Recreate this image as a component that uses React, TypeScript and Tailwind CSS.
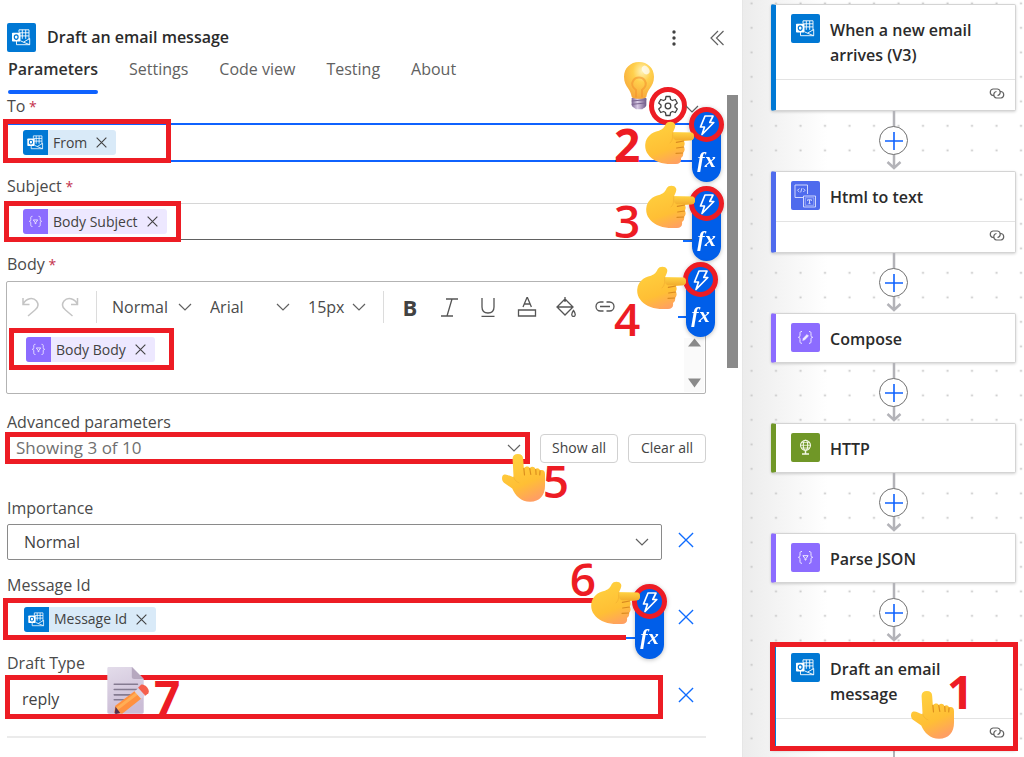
import React from "react";

type Glyph = "outlook" | "html" | "compose" | "http" | "json";

function GlyphArt({ kind }: { kind: Glyph }) {
  if (kind === "outlook") {
    return (
      <>
        <g fill="none" stroke="#fff" strokeWidth="0.9">
          <path d="M12 9.500V6.800h10v9.700M12 9.800h10M12 12.900h10M15.300 6.800v9M18.700 6.800v9" />
          <path d="M9.500 18v3.700h13.200v-6.200l-6.200 3.700-3-1.400M16.500 19.200l6.200 2.500" />
        </g>
        <rect x="5" y="9.800" width="8.500" height="8.700" rx="0.8" fill="#fff" />
        <ellipse cx="9.200" cy="14.100" rx="1.900" ry="2.200" fill="none" stroke="#0078d4" strokeWidth="1.200" />
      </>
    );
  }
  if (kind === "html") {
    return (
      <g fill="none" stroke="#dfe3ff" strokeWidth="0.9">
        <path d="M12 16.500H4V4h12.500v9" />
        <path d="M12.500 15h12v11h-12z" />
        <path d="M14.300 16.800h8.500v7.500h-8.500z" strokeWidth="0.5" />
        <path d="M8.300 7.500L6.500 9.300l1.800 1.700M12.300 7.500L14 9.300 12.300 11M10.900 7.200L9.700 11.400" />
        <path d="M16.500 19.800v-1h4v1M18.500 18.800v3.600M17.500 22.400h2" />
      </g>
    );
  }
  if (kind === "http") {
    return (
      <g fill="none" stroke="#f2f7e6" strokeWidth="1.100">
        <circle cx="14.500" cy="12.300" r="5" />
        <ellipse cx="14.500" cy="12.300" rx="2.200" ry="5" />
        <path d="M9.500 12.300h10M10.300 9.600h8.400M10.300 15h8.400" strokeWidth="0.8" />
        <path d="M14.500 17.500v3M11 21h7" strokeWidth="1.500" />
      </g>
    );
  }
  return (
    <g fill="none" stroke="#f1ecff" strokeWidth="1">
      <path d="M11 8.500c-1.800 0-2 .6-2 2v1.800c0 1.200-.5 2-1.700 2 1.200 0 1.700.8 1.700 2v2c0 1.400.2 2 2 2" />
      <path d="M18 8.500c1.800 0 2 .6 2 2v1.800c0 1.200.5 2 1.700 2-1.200 0-1.700.8-1.700 2v2c0 1.400-.2 2-2 2" />
      {kind === "json" ? (
        <path d="M11.900 12.700h5.200l-2.100 2.800v1.500h-1v-1.500z" />
      ) : (
        <path d="M11.700 17.500l.6-2.300 3.700-3.700 1.500 1.500-3.700 3.700z" fill="#f1ecff" strokeWidth="0.5" />
      )}
    </g>
  );
}

const tileColor: Record<Glyph, string> = {
  outlook: "bg-[#0078d4]",
  html: "bg-[#4f6bed]",
  compose: "bg-[#8c6cff]",
  http: "bg-[#709727]",
  json: "bg-[#8c6cff]",
};

function Tile({ kind, small = false }: { kind: Glyph; small?: boolean }) {
  return (
    <svg viewBox="0 0 29 29" aria-hidden="true" className={`${small ? "size-[25px] rounded-l-[3px]" : "size-[29px] rounded-xs"} shrink-0 ${tileColor[kind]}`}>
      <GlyphArt kind={kind} />
    </svg>
  );
}

function Chevron({ className = "" }: { className?: string }) {
  return (
    <svg viewBox="0 0 14 8" aria-hidden="true" className={`h-2 w-3.5 shrink-0 ${className}`} fill="none" stroke="#616161" strokeWidth="1.200">
      <path d="M1 1l6 6 6-6" />
    </svg>
  );
}

function Cross({ className }: { className: string }) {
  return (
    <svg viewBox="0 0 12 12" aria-hidden="true" className={className} fill="none" stroke="currentColor">
      <path d="M.7.7l10.600 10.600M11.300.7L.7 11.300" />
    </svg>
  );
}

function Chip({ kind, text }: { kind: Glyph; text: string }) {
  return (
    <span className={`flex h-[25px] items-center rounded-[3px] text-sm text-[#424242] ${kind === "outlook" ? "bg-[#d9eaf8]" : "bg-[#ede8ff]"}`}>
      <Tile kind={kind} small />
      <span className="pl-[5px] whitespace-nowrap">{text}</span>
      <button aria-label={`Remove ${text}`} className="flex w-[29px] justify-center">
        <Cross className="size-[11px] stroke-[1.2]" />
      </button>
    </span>
  );
}

function Label({ children, required = false, className = "" }: { children: React.ReactNode; required?: boolean; className?: string }) {
  return (
    <div className={`h-5 text-base leading-5 text-[#4a4a4a] ${className}`}>
      {children}
      {required && <span className="text-sm leading-5 text-[#c4314b]"> *</span>}
    </div>
  );
}

const lift = "drop-shadow-[0_1px_2px_rgba(0,0,0,0.25)]";

function TokenPill({ className }: { className: string }) {
  return (
    <div className={`absolute z-10 flex h-[72px] w-[29px] flex-col items-center rounded-full bg-[#005ee9] ${lift} ${className}`}>
      <button aria-label="Dynamic content" className="-mt-[3px] flex size-[35px] shrink-0 items-center justify-center rounded-full border-5 border-[#ed1c24] bg-[#005ee9]">
        <svg viewBox="0 0 18 22" className="h-[22px] w-[18px]" fill="none" stroke="#fff" strokeWidth="1.700" strokeLinejoin="round">
          <path d="M7 2h8l-3.200 6.500h4L4 20.500l2.500-7.500h-4z" />
        </svg>
      </button>
      <button aria-label="Expression" className="pt-1 font-[Liberation_Serif,serif] text-[22px] leading-7 font-bold text-white italic">
        fx
      </button>
    </div>
  );
}

function Frame({ className }: { className: string }) {
  return <div aria-hidden="true" className={`pointer-events-none absolute border-5 border-[#ed1c24] ${className}`} />;
}

function Step({ n, bold = false, className }: { n: number; bold?: boolean; className: string }) {
  return (
    <span className={`pointer-events-none absolute z-10 text-[46px] leading-[46px] text-[#ed1c24] ${bold ? "font-bold" : "font-semibold"} ${className}`}>
      {n}
    </span>
  );
}

function HandDefs() {
  return (
    <svg className="absolute size-0" aria-hidden="true">
      <defs>
        <linearGradient id="skin" x1="0.2" y1="0" x2="0.6" y2="1">
          <stop offset="0" stopColor="#ffd23f" />
          <stop offset="0.65" stopColor="#ffbf35" />
          <stop offset="1" stopColor="#ff9f62" />
        </linearGradient>
        <linearGradient id="finger" x1="0" y1="0" x2="0" y2="1">
          <stop offset="0" stopColor="#ffd545" />
          <stop offset="1" stopColor="#efa72b" />
        </linearGradient>
        <radialGradient id="glass" cx="0.6" cy="0.25" r="0.75">
          <stop offset="0" stopColor="#fff3b8" />
          <stop offset="0.4" stopColor="#ffd04c" />
          <stop offset="1" stopColor="#f7a83b" />
        </radialGradient>
        <linearGradient id="cap" x1="0" x2="1">
          <stop offset="0" stopColor="#7d6796" />
          <stop offset="0.4" stopColor="#d9cbe6" />
          <stop offset="1" stopColor="#6f5a87" />
        </linearGradient>
        <linearGradient id="sheet" x1="0" y1="0" x2="0.3" y2="1">
          <stop offset="0" stopColor="#e3dcea" />
          <stop offset="1" stopColor="#cbbdd6" />
        </linearGradient>
      </defs>
    </svg>
  );
}

function HandRight({ className }: { className: string }) {
  return (
    <svg viewBox="0 0 147 129" aria-hidden="true" className={`pointer-events-none absolute z-20 h-[43px] w-[49px] ${className}`}>
      <path fill="url(#skin)" d="M62 10C67 0 86 0 90 10c3 7-2 15-6 24l55 2c6 1 8 6 8 11s-3 10-9 11l-22 2c4 5 4 12 0 17 5 6 3 14-2 19 2 7-2 12-6 15 2 12-4 17-15 18-20 2-44-1-60-9C10 108-2 90 1 68 3 48 18 34 42 29 54 25 57 20 62 10z" />
      <path fill="url(#finger)" d="M88 34h51c6 1 8 6 8 12 0 7-4 11-9 12H92c-10-4-12-20-4-24z" opacity="0.8" />
      <path d="M116 60l-22 4M116 78l-21 3M113 96l-20 1" fill="none" stroke="#d98a20" strokeWidth="3.500" strokeLinecap="round" />
      <path d="M84 34c-3 11 2 22-9 32" fill="none" stroke="#e8a02a" strokeWidth="2" strokeLinecap="round" opacity="0.6" />
    </svg>
  );
}

function HandUp({ className }: { className: string }) {
  return (
    <svg viewBox="0 0 134 148" aria-hidden="true" className={`pointer-events-none absolute z-20 h-[49px] w-[45px] ${className}`}>
      <path fill="url(#skin)" d="M34 18C34 8 40 3 50 3s16 5 16 15l2 28c5-7 14-7 18-1 6-6 14-4 17 3 5-4 12-2 14 4 9-2 15 1 15 12v34c0 30-16 49-45 49-28 0-44-18-54-40L8 90C0 84 0 67 9 65c8-2 16 5 28 8z" />
      <path d="M68 46l2 20M86 47l3 18M104 50l1 15M117 54l-1 12" fill="none" stroke="#dc8e1e" strokeWidth="3.500" strokeLinecap="round" />
      <path d="M37 72c2 10 9 15 16 18" fill="none" stroke="#eaa530" strokeWidth="2" strokeLinecap="round" opacity="0.6" />
    </svg>
  );
}

function Bulb({ className }: { className: string }) {
  return (
    <svg viewBox="0 0 90 144" aria-hidden="true" className={`pointer-events-none absolute z-10 h-12 w-[30px] ${className}`}>
      <path d="M23 108h44v20c0 8-8 9-12 14H36c-4-5-13-7-13-14z" fill="url(#cap)" />
      <path d="M23 117l44-4M23 127l43-4" stroke="#7a6591" strokeWidth="3" />
      <path d="M45 0c26 0 45 19 45 44 0 16-6 26-12 35-6 8-9 15-11 25-2 8-42 8-44 0-2-10-5-17-11-25C6 70 0 60 0 44 0 19 19 0 45 0z" fill="url(#glass)" />
      <path d="M36 106V84C24 76 22 64 28 55c8-11 26-11 34 0 6 9 4 21-8 29v22" fill="none" stroke="#f4932f" strokeWidth="6" opacity="0.6" />
      <ellipse cx="65" cy="24" rx="10" ry="14" fill="#fff" opacity="0.7" transform="rotate(-35 65 24)" />
    </svg>
  );
}

function Memo({ className }: { className: string }) {
  return (
    <svg viewBox="0 0 127 142" aria-hidden="true" className={`pointer-events-none absolute z-10 h-[47px] w-[42px] ${className}`}>
      <path d="M5 0h72l34 36v100c0 3-2 5-5 5H6c-3 0-5-2-5-5V5c0-3 1-5 4-5z" fill="url(#sheet)" />
      <path d="M75 0v30c0 4 3 6 7 6h29z" fill="#b6a8bf" />
      <path d="M22 52h70M22 68h70M22 84h48M22 99h36" stroke="#857b91" strokeWidth="5" strokeLinecap="round" />
      <path d="M85 72l19 23-58 46-24-3 3-21z" fill="#ff9140" />
      <path d="M88 76l6 7-62 48-5-8z" fill="#ffae55" />
      <path d="M83 74l13-11 19 23-12 10z" fill="#dcd3e4" />
      <path d="M94 63l8-9c9-7 30 13 23 25l-9 8z" fill="#f5604d" />
      <path d="M26 120l14 19-13 3-4-2z" fill="#53304f" />
    </svg>
  );
}

const tools: { name: string; art: React.ReactNode }[] = [
  { name: "Italic", art: <path d="M7 2h12M2 19h12M13 2L8 19" /> },
  { name: "Underline", art: <path d="M4 1v9c0 4 2 6 6 6s6-2 6-6V1M3.500 19.500h13" /> },
  { name: "Font color", art: <path d="M6 10l4.200-10 4.200 10M7.500 7h5.500M1.500 13h17v6h-17z" /> },
  { name: "Fill color", art: <path d="M9 0v5M9 2L1 10l8 8 8-8zM2 10h14M17.500 13.500c3 4 1.500 6 0 6s-3-2 0-6z" /> },
  { name: "Link", art: <path d="M8.500 5H5.500a4.500 4.500 0 000 9h3M11.500 5h3a4.500 4.500 0 010 9h-3M5 9.500h10" /> },
];

function ToolSelect({ label, value, width }: { label: string; value: string; width: string }) {
  return (
    <span className={`relative flex items-center ${width}`}>
      <select aria-label={label} className="w-full appearance-none bg-transparent text-base text-[#4a4a4a]">
        <option>{value}</option>
      </select>
      <Chevron className="pointer-events-none absolute right-0" />
    </span>
  );
}

function Editor() {
  return (
    <div className="relative mt-[7px] -ml-px h-[113px] rounded-xs border border-[#b3b3b3]">
      <div className="flex h-[49px] items-center pl-3.5">
        <button aria-label="Undo" className="w-5">
          <svg viewBox="0 0 20 20" className="size-5" fill="none" stroke="#c4c4c4" strokeWidth="1.500">
            <path d="M2 1v6.500h6.500M2 7.500C5 1 12 0 15.500 4c3 4 1 7-1.500 9l-7 6" />
          </svg>
        </button>
        <button aria-label="Redo" className="ml-[19px] w-5">
          <svg viewBox="0 0 20 20" className="size-5" fill="none" stroke="#c4c4c4" strokeWidth="1.500">
            <path d="M17.500 1v6.500H11M17.500 7.500C14.500 1 7.500 0 4 4c-3 4-1 7 1.500 9l7 6" />
          </svg>
        </button>
        <span className="ml-4 h-8 w-px bg-[#dcdcdc]" />
        <span className="flex gap-[18px] pl-[15px]">
          <ToolSelect label="Block format" value="Normal" width="w-20" />
          <ToolSelect label="Font family" value="Arial" width="w-20" />
          <ToolSelect label="Font size" value="15px" width="w-[58px]" />
        </span>
        <span className="ml-[17px] h-8 w-px bg-[#dcdcdc]" />
        <span className="flex items-center gap-[19px] pl-4">
          <button aria-label="Bold" className="w-5 text-[22px] leading-6 font-bold text-[#424242]">B</button>
          {tools.map((t) => (
            <button key={t.name} aria-label={t.name}>
              <svg viewBox="0 0 20 20" className="size-5" fill="none" stroke="#555" strokeWidth="1.300">
                {t.art}
              </svg>
            </button>
          ))}
        </span>
      </div>
      <div className="flex pt-1.5 pl-[19px]">
        <Chip kind="json" text="Body Body" />
      </div>
      <Frame className="top-[46px] left-0.5 h-[42px] w-[165px]" />
      <div className="absolute right-px bottom-px flex h-[54px] w-5 flex-col items-center justify-between bg-[#fafafa] pb-1">
        <svg viewBox="0 0 13 8" className="h-[9px] w-[13px]" fill="#8a8a8a"><path d="M6.500 0L13 8H0z" /></svg>
        <svg viewBox="0 0 13 9" className="h-[10px] w-[13px]" fill="#8a8a8a"><path d="M0 0h13L6.500 9z" /></svg>
      </div>
      <Step n={4} className="top-[13px] left-[607px]" />
      <HandRight className="-top-4 left-[630px]" />
      <span className="absolute top-[34px] left-[671px] h-0.5 w-3 bg-[#0f6cff]" />
      <TokenPill className="-top-[17px] left-[679px]" />
    </div>
  );
}

function RemoveButton({ label }: { label: string }) {
  return (
    <button aria-label={label} className="mr-[11px] flex w-[18px] items-center justify-center pb-[5px] text-[#0f6cff]">
      <Cross className="size-4 stroke-1" />
    </button>
  );
}

function ParameterPanel() {
  return (
    <main className="relative min-w-0 flex-1 border-r border-[#e6e6e6] bg-white pr-[36px] pl-[7px]">
      <header className="flex items-center pt-[23px]">
        <Tile kind="outlook" />
        <h1 className="pl-[11px] text-base leading-[29px] font-semibold text-[#2b2b2b]">Draft an email message</h1>
        <button aria-label="More" className="mr-6 ml-auto">
          <svg viewBox="0 0 18 18" className="size-[18px]" fill="#424242"><circle cx="9" cy="3" r="1.700" /><circle cx="9" cy="9" r="1.700" /><circle cx="9" cy="15" r="1.700" /></svg>
        </button>
        <button aria-label="Collapse" className="-mr-[19px] ml-0.5">
          <svg viewBox="0 0 16 18" className="h-[18px] w-4" fill="none" stroke="#616161" strokeWidth="1.200"><path d="M9 2L2 9l7 7M14.500 2l-7 7 7 7" /></svg>
        </button>
      </header>
      <nav role="tablist" className="flex h-[42px] gap-[31px] pl-px text-base text-[#616161]">
        <button role="tab" aria-selected="true" className="flex flex-col justify-between pt-[5px] font-semibold text-[#303030]">
          Parameters
          <span className="h-1 w-full rounded-full bg-[#0f62fe]" />
        </button>
        {["Settings", "Code view", "Testing", "About"].map((t) => (
          <button key={t} role="tab" aria-selected="false" className="flex pt-[5px]">{t}</button>
        ))}
      </nav>

      <Label required className="mt-0.5">To</Label>
      <div className="relative mt-[7px] flex h-[39px] items-center border-y-2 border-[#0f62fe] pl-4">
        <Chip kind="outlook" text="From" />
        <Frame className="-top-[6px] -left-1 h-[44px] w-[168px]" />
        <Bulb className="-top-[63px] left-[617px]" />
        <button aria-label="Input options" className="absolute -top-[38px] left-[642px] flex size-[38px] items-center justify-center rounded-full border-5 border-[#ed1c24] bg-white">
          <svg viewBox="0 0 24 24" className="size-6" fill="none" stroke="#424242" strokeWidth="1.300" strokeLinejoin="round">
            <path d="M10 2.500h4l.6 3 1.800 1 2.900-1 2 3.500-2.300 2v2l2.300 2-2 3.500-2.900-1-1.800 1-.6 3h-4l-.6-3-1.800-1-2.900 1-2-3.500 2.300-2v-2l-2.300-2 2-3.500 2.900 1 1.800-1z" />
            <circle cx="12" cy="12" r="2.800" />
          </svg>
        </button>
        <Chevron className="absolute -top-[20px] left-[678px]" />
        <Step n={2} bold className="-top-[4px] left-[607px]" />
        <HandRight className="-top-1 left-[638px]" />
        <TokenPill className="-top-[15px] left-[685px]" />
      </div>

      <Label required className="mt-3.5">Subject</Label>
      <div className="relative mt-[7px] flex h-[37px] items-center border-t border-b border-t-[#d6d6d6] border-b-[#616161] pl-4">
        <Chip kind="json" text="Body Subject" />
        <Frame className="-top-[3px] -left-[3px] h-[41px] w-[177px]" />
        <Step n={3} className="-top-[7px] left-[607px]" />
        <HandRight className="-top-[19px] left-[639px]" />
        <span className="absolute top-[36px] left-[676px] h-0.5 w-3 bg-[#0f6cff]" />
        <TokenPill className="-top-[15px] left-[685px]" />
      </div>

      <Label required className="mt-3.5">Body</Label>
      <Editor />

      <Label className="mt-[18px]">Advanced parameters</Label>
      <div className="flex items-center">
        <div className="relative -ml-0.5 flex h-8 flex-1 items-center border-5 border-[#ed1c24] pr-1 pl-1.5">
          <select aria-label="Advanced parameters" className="h-full w-full appearance-none bg-transparent text-[17px] leading-5 text-[#707070]">
            <option>Showing 3 of 10</option>
          </select>
          <Chevron className="pointer-events-none" />
          <HandUp className="top-4 right-[-21px]" />
          <Step n={5} className="top-[20px] right-[-44px]" />
        </div>
        <button className="ml-2.5 h-[29px] w-[78px] rounded-[4px] border border-[#d1d1d1] text-sm text-[#424242]">Show all</button>
        <button className="ml-2.5 h-[29px] w-[78px] rounded-[4px] border border-[#d1d1d1] text-sm text-[#424242]">Clear all</button>
      </div>

      <Label className="mt-[34px]"><label htmlFor="importance">Importance</label></Label>
      <div className="mt-1.5 flex gap-[15px]">
        <div className="flex h-9 flex-1 items-center rounded-xs border border-[#8a8a8a] pr-3 pl-4">
          <select id="importance" className="w-full appearance-none bg-transparent text-base text-[#424242]">
            <option>Normal</option>
          </select>
          <Chevron className="pointer-events-none" />
        </div>
        <RemoveButton label="Remove Importance" />
      </div>

      <Label className="mt-[15px]">Message Id</Label>
      <div className="mt-[3px] flex gap-[15px]">
        <div className="relative -ml-1 flex h-[42px] flex-1 items-center pl-[21px]">
          <Chip kind="outlook" text="Message Id" />
          <Frame className="inset-y-0 right-9 left-0 border-r-0" />
          <Step n={6} className="-top-[43px] right-[66px]" />
          <HandRight className="-top-[17px] right-[22px]" />
          <span className="absolute right-6 bottom-px h-0.5 w-3 bg-[#0f6cff]" />
          <TokenPill className="-top-[11px] -right-0.5" />
        </div>
        <RemoveButton label="Remove Message Id" />
      </div>

      <Label className="mt-[13px]"><label htmlFor="draft-type">Draft Type</label></Label>
      <div className="mt-0.5 flex gap-3.5">
        <div className="relative -ml-0.5 flex-1">
          <input id="draft-type" defaultValue="reply" className="block h-11 w-full border-5 border-[#ed1c24] px-3 pt-1 text-base text-[#424242]" />
          <Memo className="-top-2 left-[102px]" />
          <Step n={7} bold className="-top-0.5 left-[149px]" />
        </div>
        <RemoveButton label="Remove Draft Type" />
      </div>
      <hr className="mt-[17px] border-t-2 border-[#ebebeb]" />
      <div aria-hidden="true" className="absolute top-[95px] right-1 h-[273px] w-[11px] bg-[#8a8a8a]" />
    </main>
  );
}

const steps: { title: string; kind: Glyph; bar: string; linked?: boolean; current?: boolean }[] = [
  { title: "When a new email arrives (V3)", kind: "outlook", bar: "border-l-[#0078d4]", linked: true },
  { title: "Html to text", kind: "html", bar: "border-l-[#4f6bed]", linked: true },
  { title: "Compose", kind: "compose", bar: "border-l-[#8c6cff]" },
  { title: "HTTP", kind: "http", bar: "border-l-[#709727]" },
  { title: "Parse JSON", kind: "json", bar: "border-l-[#8c6cff]" },
  { title: "Draft an email message", kind: "outlook", bar: "border-l-[#0078d4]", linked: true, current: true },
];

function Connector() {
  return (
    <div className="relative flex h-[60px] w-full flex-col items-center">
      <svg viewBox="0 0 16 60" aria-hidden="true" className="absolute h-[60px] w-4" fill="none" stroke="#b3b3b8" strokeWidth="2.500">
        <path d="M8 0v57M1.500 51l6.500 6 6.500-6" />
      </svg>
      <button aria-label="Insert a step" className="relative mt-[15px] flex size-[29px] items-center justify-center rounded-full border border-[#707070] bg-white">
        <svg viewBox="0 0 18 18" className="size-[18px]" stroke="#0f62fe" strokeWidth="1.600"><path d="M9 0v18M0 9h18" /></svg>
      </button>
    </div>
  );
}

function FlowCanvas() {
  return (
    <aside className="relative w-[281px] shrink-0 overflow-hidden bg-linear-to-r from-[#ececec] to-white to-30%">
      <svg aria-hidden="true" className="absolute inset-0 size-full">
        <defs>
          <pattern id="dots" x="-4" y="-9" width="24.500" height="24.500" patternUnits="userSpaceOnUse">
            <rect x="11.500" y="11.500" width="2" height="1.700" fill="#c6c6c6" />
          </pattern>
        </defs>
        <rect width="100%" height="100%" fill="url(#dots)" />
      </svg>
      <div className="relative flex flex-col pt-1 pr-2 pl-7">
        {steps.map((s, i) => (
          <React.Fragment key={s.title}>
            {i > 0 && <Connector />}
            <article className={`relative rounded-xs border border-l-5 border-[#d4d4d4] bg-white shadow-[0_1px_3px_rgba(0,0,0,0.18)] ${s.bar}`}>
              <div className={`flex pr-4 pl-[15px] ${s.title.length > 15 ? "h-[74px]" : s.linked ? "h-[49px]" : "h-12"}`}>
                <div className="pt-[9px]"><Tile kind={s.kind} /></div>
                <h2 className="pt-[13px] pl-2.5 text-base leading-[25px] font-semibold text-[#2b2b2b]">{s.title}</h2>
              </div>
              {s.linked && (
                <div className="flex h-[31px] items-center justify-end border-t border-[#e3e3e3] pr-2.5 pb-[3px]">
                  <svg viewBox="0 0 16 11" role="img" aria-label="Connection" className="h-[11px] w-4" fill="none" stroke="#616161" strokeWidth="1.200">
                    <path d="M5 7.500H4A3.300 3.300 0 014 1h4.500a3.300 3.300 0 010 6.500" />
                    <path d="M11 3.500h1A3.300 3.300 0 0112 10H7.500a3.300 3.300 0 010-6.500" />
                  </svg>
                </div>
              )}
              {s.current && (
                <>
                  <Frame className="-inset-y-0.5 -right-[3px] -left-1.5" />
                  <HandUp className="top-[46px] left-[134px]" />
                  <Step n={1} bold className="top-[24px] left-[171px]" />
                </>
              )}
            </article>
          </React.Fragment>
        ))}
        <span className="h-2 w-0.5 self-center bg-[#b3b3b8]" />
      </div>
    </aside>
  );
}

export default function App() {
  return (
    <div className="flex min-h-screen bg-white font-['Open_Sans','Noto_Sans',sans-serif]">
      <HandDefs />
      <ParameterPanel />
      <FlowCanvas />
    </div>
  );
}
